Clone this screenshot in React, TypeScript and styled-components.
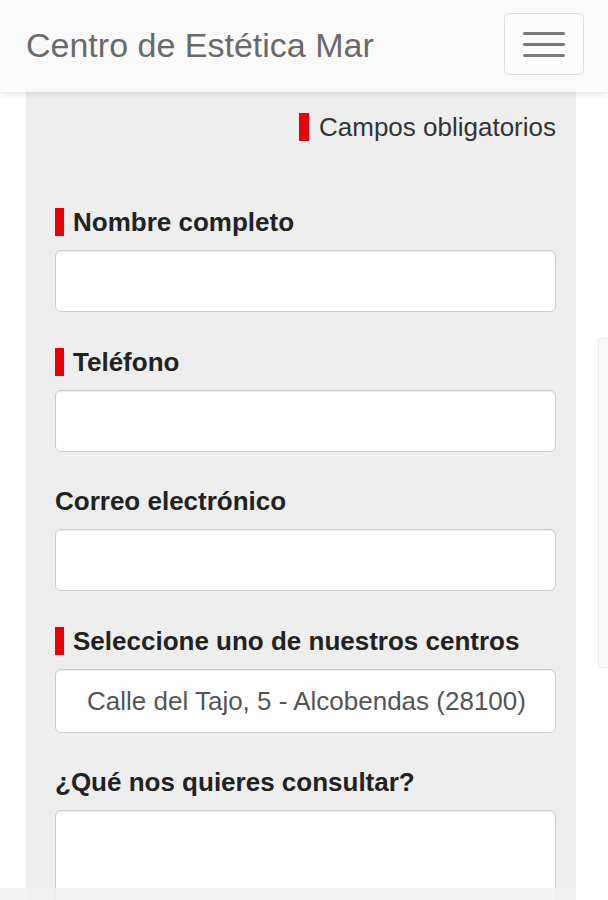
import styled, { createGlobalStyle } from "styled-components";

const GlobalStyle = createGlobalStyle`
    html, body {
        margin: 0;
        padding: 0;
        background: #ffffff;
        font-family: "Liberation Sans", Arial, sans-serif;
        overflow: hidden;
    }
    * {
        box-sizing: border-box;
    }
`;

const App = () => {
    return (
        <>
            <GlobalStyle />
            <Navbar>
                <Brand>Centro de Estética Mar</Brand>
                <Toggle type="button" aria-label="Menú">
                    <Bar />
                    <Bar />
                    <Bar />
                </Toggle>
            </Navbar>
            <Panel>
                <Legend>
                    <Mark $wide />
                    Campos obligatorios
                </Legend>
                <Group>
                    <Label>
                        <Mark />
                        Nombre completo
                    </Label>
                    <Input type="text" />
                </Group>
                <Group>
                    <Label>
                        <Mark />
                        Teléfono
                    </Label>
                    <Input type="tel" />
                </Group>
                <Group>
                    <Label>Correo electrónico</Label>
                    <Input type="email" />
                </Group>
                <Group>
                    <Label>
                        <Mark />
                        Seleccione uno de nuestros centros
                    </Label>
                    <Select defaultValue="alcobendas">
                        <option value="alcobendas">Calle del Tajo, 5 - Alcobendas (28100)</option>
                    </Select>
                </Group>
                <Group>
                    <Label>¿Qué nos quieres consultar?</Label>
                    <TextArea />
                </Group>
            </Panel>
            <ScrollTrack />
            <SideTrack />
        </>
    );
};

const Navbar = styled.header`
    position: relative;
    z-index: 2;
    display: flex;
    align-items: flex-start;
    justify-content: space-between;
    height: 92px;
    padding: 13px 24px 0 26px;
    background: #fafafa;
    box-shadow: 0 2px 6px rgba(0, 0, 0, 0.12);
`;

const Brand = styled.span`
    margin-top: 12px;
    color: #6a6a6a;
    font-size: 34px;
    line-height: 40px;
`;

const Toggle = styled.button`
    display: flex;
    flex-direction: column;
    align-items: center;
    justify-content: center;
    gap: 8px;
    width: 80px;
    height: 62px;
    padding: 0;
    border: 1px solid #dddddd;
    border-radius: 5px;
    background: #fcfcfc;
`;

const Bar = styled.span`
    display: block;
    width: 42px;
    height: 3px;
    border-radius: 2px;
    background: #7a7a7a;
`;

const Panel = styled.main`
    width: 550px;
    min-height: 820px;
    margin-left: 26px;
    padding: 17px 20px 0 29px;
    background: #eeeeee;
`;

const Legend = styled.p`
    display: flex;
    align-items: center;
    justify-content: flex-end;
    margin: 0 0 59px;
    color: #333333;
    font-size: 26px;
    line-height: 36px;
`;

const Mark = styled.span<{ $wide?: boolean }>`
    display: inline-block;
    width: ${({ $wide }) => ($wide ? "10px" : "9px")};
    height: 28px;
    margin-right: ${({ $wide }) => ($wide ? "10px" : "9px")};
    background: #e8000b;
`;

const Group = styled.div`
    display: flex;
    flex-direction: column;
    margin-bottom: 31.5px;
`;

const Label = styled.label`
    display: flex;
    align-items: center;
    margin-bottom: 10px;
    color: #222222;
    font-size: 26px;
    font-weight: bold;
    line-height: 36px;
`;

const Input = styled.input`
    width: 100%;
    height: 62px;
    padding: 0 16px;
    border: 1px solid #cccccc;
    border-radius: 6px;
    background: #ffffff;
    box-shadow: inset 0 1px 1px rgba(0, 0, 0, 0.075);
    font-family: inherit;
    font-size: 26px;
    outline: none;
`;

const Select = styled.select`
    width: 100%;
    height: 64px;
    padding: 0 0 0 31px;
    border: 1px solid #cccccc;
    border-radius: 6px;
    background: #ffffff;
    box-shadow: inset 0 1px 1px rgba(0, 0, 0, 0.075);
    color: #555555;
    font-family: inherit;
    font-size: 26px;
    appearance: none;
    outline: none;
`;

const TextArea = styled.textarea`
    width: 100%;
    height: 120px;
    border: 1px solid #cccccc;
    border-radius: 6px;
    background: #ffffff;
    box-shadow: inset 0 1px 1px rgba(0, 0, 0, 0.075);
    font-family: inherit;
    font-size: 26px;
    outline: none;
`;

const ScrollTrack = styled.div`
    position: fixed;
    left: 0;
    bottom: 0;
    width: 576px;
    height: 12px;
    background: rgba(241, 241, 241, 0.85);
    z-index: 3;
`;

const SideTrack = styled.div`
    position: fixed;
    top: 338px;
    right: 0;
    width: 10px;
    height: 330px;
    border: 1px solid #ececec;
    border-right: none;
    background: #f8f8f8;
    z-index: 3;
`;

export default App;
